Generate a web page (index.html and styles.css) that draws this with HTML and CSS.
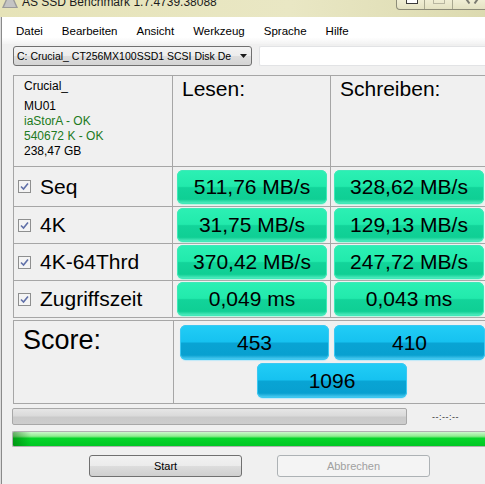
FILE: index.html
```html
<!DOCTYPE html>
<html lang="de">
  <head>
    <meta charset="UTF-8" />
    <title>AS SSD Benchmark</title>
    <link rel="stylesheet" href="styles.css">
  </head>
  <body>
    <div class="window">
      <!-- Title bar -->
      <div class="titlebar">
        <svg class="app-icon" width="16" height="10" viewBox="0 0 16 10">
          <path d="M4 0 L12 0 L16 9 L0 9 Z" fill="#9a9a9a" />
          <path d="M5 1 L11 1 L14 8 L2 8 Z" fill="#c4c4c4" />
        </svg>
        <span class="title-text">AS SSD Benchmark 1.7.4739.38088</span>
        <div class="caption-buttons">
          <div class="cap-btn min"><span></span></div>
          <div class="cap-btn max"><span></span></div>
          <div class="cap-btn close"></div>
        </div>
      </div>

      <!-- Menu -->
      <div class="menubar">
        <span>Datei</span>
        <span>Bearbeiten</span>
        <span>Ansicht</span>
        <span>Werkzeug</span>
        <span>Sprache</span>
        <span>Hilfe</span>
      </div>

      <div class="toolbar">
        <div class="combo">
          <span class="combo-text">C: Crucial_ CT256MX100SSD1 SCSI Disk De</span>
          <svg class="combo-arrow" width="7" height="4" viewBox="0 0 7 4"><path d="M0 0 H7 L3.5 4 Z" fill="#1a1a1a" /></svg>
        </div>
        <div class="textbox"></div>
      </div>

      <!-- Results table -->
      <div class="results">
        <div class="cell info">
          <div class="drive-name">Crucial_</div>
          <div>MU01</div>
          <div class="ok">iaStorA - OK</div>
          <div class="ok">540672 K - OK</div>
          <div>238,47 GB</div>
        </div>
        <div class="cell head">Lesen:</div>
        <div class="cell head">Schreiben:</div>

        <div class="cell label"><span class="check"></span>Seq</div>
        <div class="cell bar-cell read"><div class="bar">511,76 MB/s</div></div>
        <div class="cell bar-cell write"><div class="bar">328,62 MB/s</div></div>

        <div class="cell label"><span class="check"></span>4K</div>
        <div class="cell bar-cell read"><div class="bar">31,75 MB/s</div></div>
        <div class="cell bar-cell write"><div class="bar">129,13 MB/s</div></div>

        <div class="cell label"><span class="check"></span>4K-64Thrd</div>
        <div class="cell bar-cell read"><div class="bar">370,42 MB/s</div></div>
        <div class="cell bar-cell write"><div class="bar">247,72 MB/s</div></div>

        <div class="cell label"><span class="check"></span>Zugriffszeit</div>
        <div class="cell bar-cell read"><div class="bar">0,049 ms</div></div>
        <div class="cell bar-cell write"><div class="bar">0,043 ms</div></div>
      </div>

      <!-- Score -->
      <div class="score">
        <div class="cell score-label">Score:</div>
        <div class="cell score-bars">
          <div class="bar blue read-score">453</div>
          <div class="bar blue write-score">410</div>
          <div class="bar blue total">1096</div>
        </div>
      </div>

      <div class="progress-row">
        <div class="progress-track"></div>
        <span class="timer">--:--:--</span>
      </div>
      <div class="progress-green"></div>

      <div class="buttons">
        <button class="btn">Start</button>
        <button class="btn" disabled>Abbrechen</button>
      </div>
    </div>
  </body>
</html>
```

FILE: styles.css
```css
body {
  margin: 0;
  width: 485px;
  height: 484px;
  overflow: hidden;
  background: #f0f0f0;
  font-family: 'Liberation Sans', Arial, sans-serif;
  color: #000;
}

.window {
  height: 484px;
  box-shadow: inset 1px 0 0 #dcdcdc, inset 2px 0 0 #8a8a8a;
}

/* title bar, only the lower strip is on screen */
.titlebar {
  height: 17px;
  display: flex;
  align-items: flex-start;
  background: linear-gradient(90deg, #e6e3b8 0%, #e9e7c4 60%, #dcdab0 100%);
  position: relative;
  overflow: hidden;
}

.app-icon {
  margin: -1px 0 0 2px;
}

.title-text {
  margin: -5px 0 0 4px;
  font-size: 12px;
  line-height: 14px;
  color: #1c1c1c;
}

.caption-buttons {
  position: absolute;
  top: -1px;
  left: 396px;
  display: flex;
  height: 10px;
  border: 1px solid #8d8c78;
  border-top: none;
  border-radius: 0 0 4px 4px;
  background: linear-gradient(#f1efd6, #e4e2c2);
}

.cap-btn {
  height: 10px;
  position: relative;
}

.cap-btn.min {
  width: 27px;
  border-right: 1px solid #a9a890;
}

.cap-btn.min span {
  position: absolute;
  left: 9px;
  top: 0;
  width: 10px;
  height: 4px;
  background: #fff;
  border: 1px solid #3a3a3a;
  border-top: none;
}

.cap-btn.max {
  width: 27px;
  border-right: 1px solid #a9a890;
}

.cap-btn.max span {
  position: absolute;
  left: 8px;
  top: 0;
  width: 10px;
  height: 4px;
  border: 1px solid #b8b6a0;
  border-top: none;
}

/* the bottom tips of the close cross */
.cap-btn.close {
  width: 40px;
}

.cap-btn.close::before,
.cap-btn.close::after {
  content: "";
  position: absolute;
  top: 0;
  width: 2px;
  height: 5px;
  background: #7a7a70;
}

.cap-btn.close::before {
  left: 14px;
  transform: rotate(-35deg);
}

.cap-btn.close::after {
  left: 22px;
  transform: rotate(35deg);
}

/* menu */
.menubar {
  height: 27px;
  display: flex;
  align-items: center;
  gap: 19px;
  font-size: 11.5px;
  background: linear-gradient(#ffffff 0%, #ffffff 75%, #f3f3f3 100%);
  margin-left: 2px;
  padding-left: 14px;
  box-sizing: border-box;
}

.toolbar {
  display: flex;
  gap: 7px;
  padding: 2px 0 0 13px;
}

.combo {
  width: 239px;
  height: 20px;
  box-sizing: border-box;
  border: 1px solid #707070;
  border-radius: 3px;
  background: linear-gradient(#f3f3f3 0%, #ececec 50%, #dedede 51%, #d4d4d4 100%);
  display: flex;
  align-items: center;
  padding: 0 3px;
  font-size: 10.5px;
}

.combo-text {
  flex: 1;
  white-space: nowrap;
}

.combo-arrow {
  margin-right: 1px;
}

.textbox {
  flex: 1;
  height: 20px;
  box-sizing: border-box;
  background: #fff;
  border: 1px solid #e2e3e5;
  border-right: none;
  border-radius: 2px 0 0 2px;
}

/* results grid: the gaps show the grey lines */
.results {
  margin: 9px 0 0 13px;
  width: 480px;
  display: grid;
  grid-template-columns: 158px 157px 163px;
  grid-template-rows: 90px 39px 36px 36px 36px;
  gap: 1px;
  padding: 1px;
  background: #a6a6a6;
}

.cell {
  background: #f0f0f0;
}

.info {
  padding: 3px 0 0 10px;
  font-size: 12px;
  line-height: 15px;
}

.drive-name {
  margin-bottom: 5px;
}

.ok {
  color: #217a21;
}

.head {
  font-size: 21px;
  padding: 1px 0 0 9px;
  line-height: 24px;
}

.label {
  display: flex;
  align-items: center;
  font-size: 21px;
  padding-left: 4px;
}

.check {
  width: 11px;
  height: 11px;
  margin-right: 9px;
  border: 1px solid #8e8f8f;
  background: #f4f4f4 url("data:image/svg+xml,%3Csvg xmlns='http://www.w3.org/2000/svg' width='11' height='11'%3E%3Cpath d='M2 5.5 L4.5 8 L9 2.5' stroke='%236070a8' stroke-width='1.6' fill='none'/%3E%3C/svg%3E") no-repeat;
}

.bar-cell {
  display: flex;
  align-items: center;
}

.bar-cell.read {
  padding-left: 4px;
}

.bar-cell.write {
  padding-left: 3px;
}

.bar {
  height: 34px;
  width: 150px;
  box-sizing: border-box;
  border-radius: 6px;
  display: flex;
  align-items: center;
  justify-content: center;
  font-size: 21px;
  background: linear-gradient(#2cf0b4 0%, #22eaac 48%, #12d49a 52%, #0fcf94 86%, #5ef2c8 100%);
  box-shadow: inset 0 0 0 1px #3fe9b8, 0 1px 1px #b6f4df;
}

.bar.blue {
  height: 35px;
  background: linear-gradient(#22cdf6 0%, #16c2f0 48%, #09a4d4 52%, #08a0d0 86%, #58d4f8 100%);
  box-shadow: inset 0 0 0 1px #3cc8f2, 0 1px 1px #bfe8f8;
}

/* score block */
.score {
  margin: 2px 0 0 13px;
  width: 480px;
  display: grid;
  grid-template-columns: 159px 1fr;
  gap: 1px;
  padding: 1px;
  background: #a6a6a6;
  height: 84px;
  box-sizing: border-box;
}

.score-label {
  font-size: 27px;
  padding: 3px 0 0 9px;
  line-height: 32px;
}

.score-bars {
  display: flex;
  flex-wrap: wrap;
  align-content: flex-start;
  padding: 4px 0 0 6px;
  gap: 3px 5px;
}

.bar.read-score {
  width: 149px;
}

.bar.write-score {
  width: 151px;
}

.bar.total {
  width: 150px;
  margin-left: 77px;
}

/* progress */
.progress-row {
  display: flex;
  align-items: center;
  margin: 4px 0 0 12px;
}

.progress-track {
  width: 395px;
  height: 17px;
  box-sizing: border-box;
  border: 1px solid #a8a8a8;
  border-radius: 2px;
  background: linear-gradient(#e6e6e6 0%, #dadada 45%, #cacaca 55%, #cdcdcd 100%);
}

.timer {
  margin-left: 25px;
  font-size: 9px;
  letter-spacing: 0.5px;
  color: #333;
}

.progress-green {
  margin: 6px 0 0 12px;
  height: 16px;
  box-sizing: border-box;
  border: 1px solid #b0b0b0;
  border-right: none;
  border-radius: 2px 0 0 2px;
  background:
    linear-gradient(90deg, rgba(0, 90, 0, 0.45) 0, rgba(0, 90, 0, 0) 18px),
    linear-gradient(#ccf8cc 0%, #8fec8f 30%, #06d52a 45%, #00c824 100%);
}

.buttons {
  display: flex;
  gap: 35px;
  padding: 8px 0 0 89px;
}

.btn {
  width: 153px;
  height: 22px;
  border: 1px solid #707070;
  border-radius: 3px;
  background: linear-gradient(#f2f2f2 0%, #ebebeb 50%, #dddddd 51%, #cfcfcf 100%);
  font-family: 'Liberation Sans', Arial, sans-serif;
  font-size: 11px;
  color: #000;
  padding: 0;
}

.btn:disabled {
  border-color: #adb2b5;
  background: #f4f4f4;
  color: #a0a0a0;
}
```
